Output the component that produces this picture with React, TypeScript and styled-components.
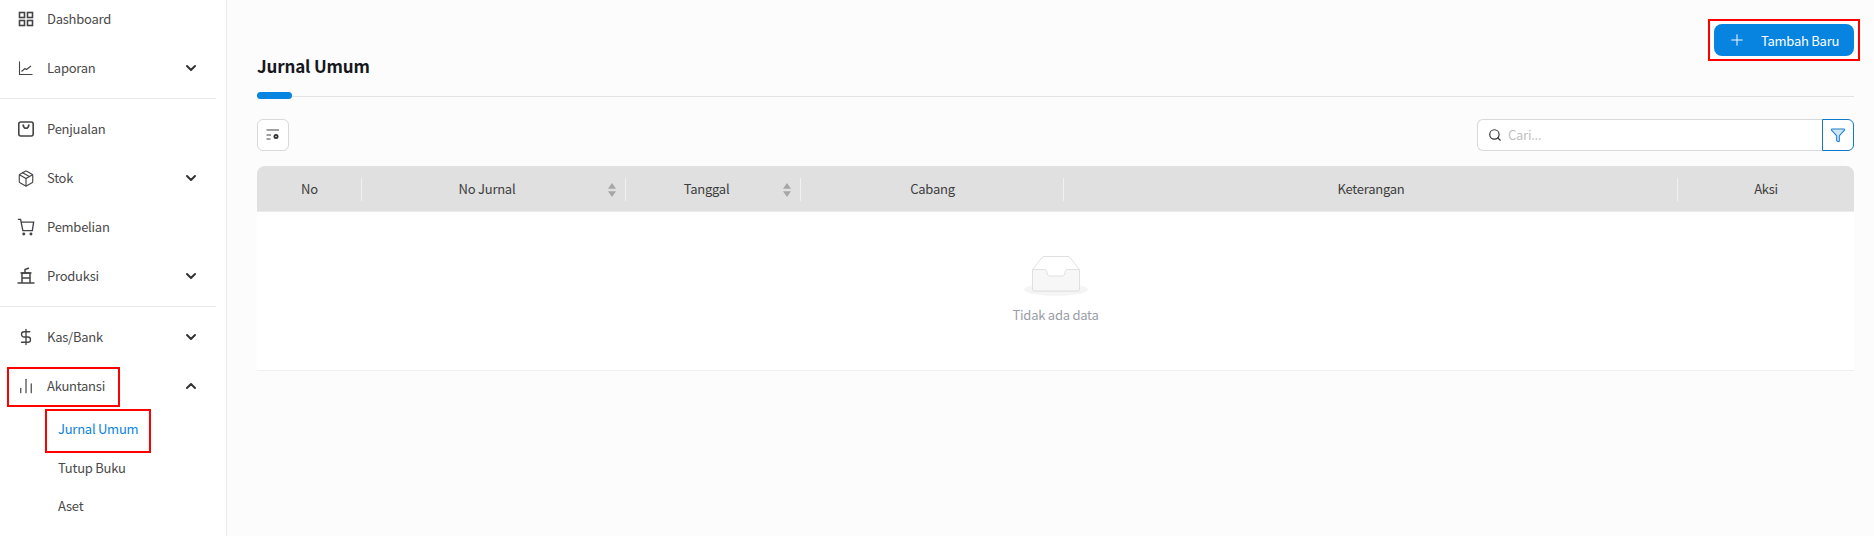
import * as React from "react";
import styled, { createGlobalStyle } from "styled-components";
import {
  ChartNoAxesColumn,
  ChevronDown,
  ChevronUp,
  DollarSign,
  Funnel,
  Package,
  Plus,
  Search,
} from "lucide-react";

const GlobalStyle = createGlobalStyle`
  html, body {
    margin: 0;
    padding: 0;
    height: 536px;
    overflow: hidden;
    background: #fcfcfc;
    font-family: "Noto Sans CJK SC", "Noto Sans", sans-serif;
    font-size: 13px;
    letter-spacing: -0.25px;
    color: #444;
  }
  *, *::before, *::after {
    box-sizing: border-box;
  }
`;

const Page = styled.div`
  display: flex;
  width: 1874px;
  height: 536px;
  overflow: hidden;
`;

const Sidebar = styled.aside`
  flex: 0 0 227px;
  height: 536px;
  overflow: hidden;
  background: #fff;
  border-right: 1px solid #e8ebef;
  padding-right: 10px;
`;

const Nav = styled.nav`
  display: flex;
  flex-direction: column;
  gap: 11px;
`;

const NavItem = styled.div<{ $marked?: boolean }>`
  position: relative;
  display: flex;
  align-items: center;
  height: 38px;
  padding: 0 0 0 17px;
  color: #4a4a4a;

  ${(p) =>
    p.$marked &&
    `
    &::after {
      content: "";
      position: absolute;
      left: 7px;
      top: 0;
      width: 113px;
      height: 40px;
      border: 2px solid #f00;
    }
  `}
`;

const Label = styled.span`
  margin-bottom: 2px;
`;

const IconBox = styled.span`
  display: flex;
  align-items: center;
  justify-content: center;
  width: 18px;
  height: 18px;
  margin-right: 12px;
  color: #444;
`;

const Arrow = styled.span`
  display: flex;
  margin-left: auto;
  margin-right: 17px;
  color: #333;
`;

const Divider = styled.div`
  height: 1px;
  background: #e5e9ee;
`;

const SubNav = styled.div`
  display: flex;
  flex-direction: column;
  margin-top: -5px;
`;

const SubItem = styled.div<{ $active?: boolean; $marked?: boolean }>`
  position: relative;
  display: flex;
  align-items: center;
  height: 38.5px;
  padding: 0 0 3px 58px;
  color: ${(p) => (p.$active ? "#0a84e0" : "#4a4a4a")};

  ${(p) =>
    p.$marked &&
    `
    &::after {
      content: "";
      position: absolute;
      left: 45px;
      top: -2px;
      width: 106px;
      height: 44px;
      border: 2px solid #f00;
    }
  `}
`;

const Main = styled.main`
  flex: 1;
  padding: 24px 20px 0 30px;
  display: flex;
  flex-direction: column;
`;

const ActionRow = styled.div`
  display: flex;
  justify-content: flex-end;
  height: 32px;
`;

const AddButton = styled.button`
  position: relative;
  display: flex;
  align-items: center;
  width: 140px;
  height: 32px;
  padding: 0 0 0 14px;
  border: 0;
  border-radius: 8px;
  background: #0784e0;
  color: #fff;
  font-family: inherit;
  font-size: 13px;
  letter-spacing: -0.25px;

  svg {
    margin-right: 15px;
  }

  &::after {
    content: "";
    position: absolute;
    left: -6px;
    top: -5px;
    width: 152px;
    height: 42px;
    border: 2px solid #f00;
  }
`;

const Title = styled.h1`
  margin: 0;
  height: 20px;
  line-height: 20px;
  font-size: 17px;
  font-weight: 700;
  letter-spacing: -0.15px;
  color: #16181d;
`;

const TabLine = styled.div`
  position: relative;
  height: 1px;
  margin-top: 20px;
  background: #e3e3e3;

  &::before {
    content: "";
    position: absolute;
    left: 0;
    top: -4px;
    width: 35px;
    height: 7px;
    border-radius: 4px;
    background: #0784e0;
  }
`;

const Toolbar = styled.div`
  display: flex;
  justify-content: space-between;
  align-items: center;
  margin-top: 22px;
  height: 32px;
`;

const SettingButton = styled.button`
  display: flex;
  align-items: center;
  justify-content: center;
  width: 32px;
  height: 32px;
  padding: 0;
  border: 1px solid #d9d9d9;
  border-radius: 6px;
  background: #fff;
`;

const SearchGroup = styled.div`
  display: flex;
  width: 377px;
  height: 32px;
`;

const SearchBox = styled.div`
  flex: 1;
  display: flex;
  align-items: center;
  padding-left: 10px;
  background: #fff;
  border: 1px solid #d9d9d9;
  border-right: 0;
  border-radius: 6px 0 0 6px;
  color: #bfbfbf;

  svg {
    margin-right: 6px;
    color: #333;
  }
`;

const FilterButton = styled.button`
  display: flex;
  align-items: center;
  justify-content: center;
  width: 32px;
  padding: 0;
  background: #fff;
  border: 1px solid #0f78c8;
  border-radius: 0 6px 6px 0;
  color: #1c7fd0;
`;

const Table = styled.div`
  margin-top: 15px;
  background: #fff;
  border-radius: 8px 8px 0 0;
  border-bottom: 1px solid #f0f0f0;
`;

const HeadRow = styled.div`
  display: grid;
  grid-template-columns: 105px 264px 175px 263px 614px 176px;
  height: 46px;
  background: #e0e0e0;
  border-radius: 8px 8px 0 0;
  border-bottom: 1px solid #ececec;
`;

const HeadCell = styled.div<{ $last?: boolean; $sortable?: boolean }>`
  position: relative;
  display: flex;
  align-items: center;
  justify-content: center;
  padding-right: ${(p) => (p.$sortable ? "14px" : "0")};
  color: #3d3d3d;

  ${(p) =>
    !p.$last &&
    `
    &::after {
      content: "";
      position: absolute;
      right: 0;
      top: 12px;
      height: 23px;
      width: 1px;
      background: #f1f1f1;
    }
  `}
`;

const SortIcon = styled.svg`
  position: absolute;
  right: 10px;
  top: 17px;
  width: 8px;
  height: 14px;
  fill: #a6a6a6;
`;

const Empty = styled.div`
  height: 158px;
  display: flex;
  flex-direction: column;
  align-items: center;
  padding-top: 44px;
`;

const EmptyText = styled.div`
  margin-top: 9px;
  line-height: 20px;
  color: #9a9ea6;
`;

const stroke = { fill: "none", stroke: "currentColor", strokeWidth: 1.6 };

const DashboardIcon = () => (
  <svg width="18" height="18" viewBox="0 0 18 18" {...stroke}>
    <rect x="2.5" y="2.5" width="5" height="5" />
    <rect x="10.5" y="2.5" width="5" height="5" />
    <rect x="2.5" y="10.5" width="5" height="5" />
    <rect x="10.5" y="10.5" width="5" height="5" />
  </svg>
);

const ReportIcon = () => (
  <svg width="18" height="18" viewBox="0 0 18 18" fill="none" stroke="currentColor" strokeWidth="1.1">
    <path d="M2.5 2.500v13h13" />
    <path d="M4.500 12.500l3.500-3 1.500 1 4.500-3.500" />
  </svg>
);

const SalesIcon = () => (
  <svg width="18" height="18" viewBox="0 0 18 18" {...stroke}>
    <rect x="1.800" y="2" width="14.400" height="14" rx="2" />
    <path d="M6 4.500c.5 3 1.500 3.800 3 3.800s2.500-.8 3-3.800" />
  </svg>
);

const CartIcon = () => (
  <svg width="20" height="20" viewBox="0 0 20 20" fill="none" stroke="currentColor" strokeWidth="1.5">
    <path d="M1 1.500h3l2.500 12.500h10.500l1.500-9.500H4.600" />
    <circle cx="7.500" cy="17.800" r=".9" fill="currentColor" />
    <circle cx="15.500" cy="17.800" r=".9" fill="currentColor" />
  </svg>
);

const ProductionIcon = () => (
  <svg width="18" height="18" viewBox="0 0 18 18" fill="none" stroke="currentColor" strokeWidth="1.5">
    <path d="M.5 16h17" />
    <path d="M5 16V6h8v10" />
    <path d="M3.500 6h11M5 11h8" />
    <path d="M8 6V2.500L12 1" />
  </svg>
);

const SettingIcon = () => (
  <svg width="14" height="12" viewBox="0 0 14 12" fill="none" stroke="#444" strokeWidth="1.2">
    <path d="M.5 1h12.500M.5 6h4.500M.5 10h4" />
    <circle cx="10" cy="7.500" r="2.500" fill="#333" stroke="none" />
    <circle cx="10" cy="7.500" r=".7" fill="#fff" stroke="none" />
  </svg>
);

const Sort = () => (
  <SortIcon viewBox="0 0 8 14">
    <path d="M4 0l4 5.800H0zM4 14L0 8.200h8z" />
  </SortIcon>
);

const EmptyIcon = () => (
  <svg width="64" height="40" viewBox="0 0 64 40">
    <ellipse cx="32" cy="33.500" rx="32" ry="6.500" fill="#f5f5f5" />
    <path d="M19 .5h26l10.500 13V33a2 2 0 0 1-2 2h-43a2 2 0 0 1-2-2V13.500z" fill="#fff" stroke="#e0e0e0" />
    <path d="M8.500 13.500h12.500c2.500 0 1.500 6.500 4.500 6.500h13c3 0 2-6.500 4.500-6.500h12.500V33a2 2 0 0 1-2 2h-43a2 2 0 0 1-2-2z" fill="#f7f7f7" stroke="#e0e0e0" />
  </svg>
);

const Chevron = ({ up }: { up?: boolean }) => (
  <Arrow>{up ? <ChevronUp size={16} strokeWidth={3} /> : <ChevronDown size={16} strokeWidth={3} />}</Arrow>
);

const App: React.FC = () => {
  return (
    <Page>
      <GlobalStyle />
      <Sidebar>
        <Nav>
          <NavItem>
            <IconBox><DashboardIcon /></IconBox><Label>Dashboard</Label>
          </NavItem>
          <NavItem>
            <IconBox><ReportIcon /></IconBox><Label>Laporan</Label><Chevron />
          </NavItem>
          <Divider />
          <NavItem>
            <IconBox><SalesIcon /></IconBox><Label>Penjualan</Label>
          </NavItem>
          <NavItem>
            <IconBox><Package size={21} strokeWidth={1.5} /></IconBox><Label>Stok</Label><Chevron />
          </NavItem>
          <NavItem>
            <IconBox><CartIcon /></IconBox><Label>Pembelian</Label>
          </NavItem>
          <NavItem>
            <IconBox><ProductionIcon /></IconBox><Label>Produksi</Label><Chevron />
          </NavItem>
          <Divider />
          <NavItem>
            <IconBox><DollarSign size={20} strokeWidth={1.8} /></IconBox><Label>Kas/Bank</Label><Chevron />
          </NavItem>
          <NavItem $marked>
            <IconBox><ChartNoAxesColumn size={18} strokeWidth={1.6} /></IconBox><Label>Akuntansi</Label><Chevron up />
          </NavItem>
          <SubNav>
            <SubItem $active $marked>Jurnal Umum</SubItem>
            <SubItem>Tutup Buku</SubItem>
            <SubItem>Aset</SubItem>
          </SubNav>
        </Nav>
      </Sidebar>
      <Main>
        <ActionRow>
          <AddButton>
            <Plus size={18} strokeWidth={1.3} />Tambah Baru
          </AddButton>
        </ActionRow>
        <Title>Jurnal Umum</Title>
        <TabLine />
        <Toolbar>
          <SettingButton><SettingIcon /></SettingButton>
          <SearchGroup>
            <SearchBox>
              <Search size={14} strokeWidth={2} /><Label>Cari...</Label>
            </SearchBox>
            <FilterButton><Funnel size={16} strokeWidth={1.6} fill="#cfe6f8" /></FilterButton>
          </SearchGroup>
        </Toolbar>
        <Table>
          <HeadRow>
            <HeadCell>No</HeadCell>
            <HeadCell $sortable>No Jurnal<Sort /></HeadCell>
            <HeadCell $sortable>Tanggal<Sort /></HeadCell>
            <HeadCell>Cabang</HeadCell>
            <HeadCell>Keterangan</HeadCell>
            <HeadCell $last>Aksi</HeadCell>
          </HeadRow>
          <Empty>
            <EmptyIcon />
            <EmptyText>Tidak ada data</EmptyText>
          </Empty>
        </Table>
      </Main>
    </Page>
  );
};

export default App;
